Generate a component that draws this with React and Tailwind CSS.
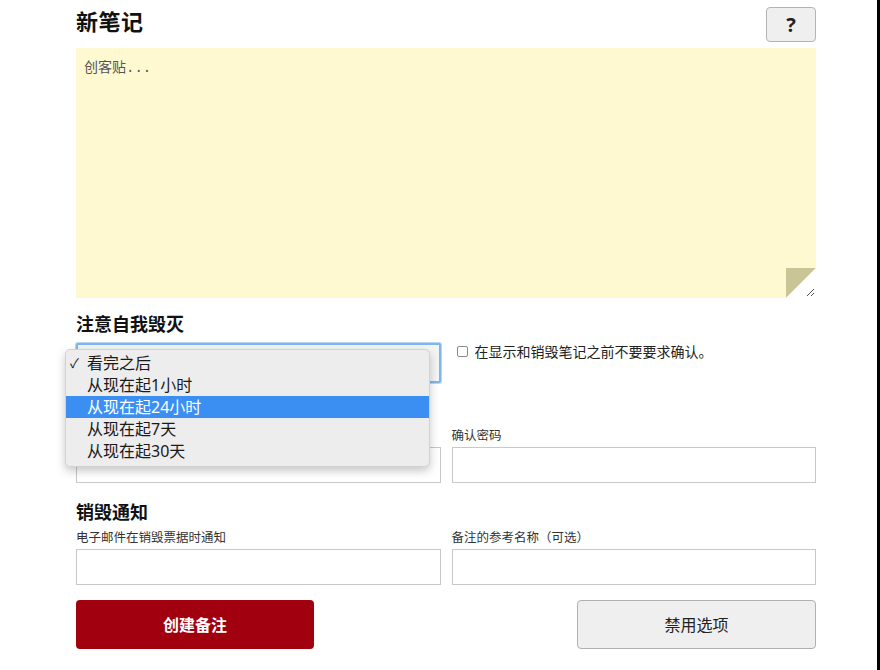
import { useState } from 'react';

// 新笔记 form with the self-destruct dropdown shown open
const OPTIONS = ['看完之后', '从现在起1小时', '从现在起24小时', '从现在起7天', '从现在起30天'];

function Field({ label }) {
  return (
    <div className="flex flex-col">
      <label className="h-[16px] text-[12.5px] leading-[16px] text-[#333] mb-[3px]">{label}</label>
      <input className="h-[36px] w-full border border-[#c8c8c8] bg-white outline-none" />
    </div>
  );
}

export default function App() {
  const [hover] = useState(2);

  return (
    <div
      className="w-[880px] h-[670px] flex bg-white text-[#111] overflow-hidden"
      style={{ fontFamily: '"Noto Sans", "Noto Sans CJK SC", sans-serif' }}
    >
      <div className="flex-1 pl-[76px]">
        <div className="w-[740px] flex flex-col">
          {/* Header */}
          <div className="flex items-center justify-between mt-[7px] h-[35px]">
            <h1 className="text-[22px] font-bold leading-none tracking-[0.5px] pb-[7px]">新笔记</h1>
            <button className="w-[50px] h-[35px] rounded-[4px] border border-[#b4b4b4] bg-[#efefef] text-[20px] font-bold text-[#222] leading-none">
              ?
            </button>
          </div>

          {/* Sticky note textarea */}
          <div className="relative mt-[6px] h-[250px] bg-[#fff9d1]">
            <div
              className="pt-[10px] pl-[8px] text-[14px] text-[#555]"
              style={{ fontFamily: '"Liberation Mono", "Noto Sans CJK SC", monospace' }}
            >
              创客贴...
            </div>
            <div className="absolute right-0 bottom-0 w-[30px] h-[30px] flex">
              <svg width="30" height="30" viewBox="0 0 30 30">
                <polygon points="0,0 30,0 0,30" fill="#c9c596" />
                <polygon points="30,0 30,30 0,30" fill="#ffffff" />
                <line x1="21" y1="28" x2="28" y2="21" stroke="#555" strokeWidth="1" />
                <line x1="25" y1="28" x2="28" y2="25" stroke="#555" strokeWidth="1" />
              </svg>
            </div>
          </div>

          {/* Self destruct */}
          <h2 className="mt-[16px] text-[18px] font-bold leading-[20px]">注意自我毁灭</h2>
          <div className="grid grid-cols-2 gap-[11px] mt-[9px]">
            <div className="relative">
              <div className="h-[40px] w-full rounded-[2px] border-2 border-[#7fb6ea] bg-[#f4f4f4] shadow-[0_0_0_1px_#b9d7f3]" />
              {/* open dropdown */}
              <div className="absolute left-[-11px] top-[6px] w-[365px] z-10 rounded-[5px] bg-[#ededed] border border-[#d2d2d2] shadow-[0_4px_10px_rgba(0,0,0,0.22)] pt-[2px] pb-[4px]">
                {OPTIONS.map((o, i) => (
                  <div
                    key={o}
                    className={`flex items-center h-[22px] text-[16px] leading-[22px] ${
                      i === hover ? 'bg-[#3b8ff2] text-white' : 'text-[#1a1a1a]'
                    }`}
                  >
                    <span className="w-[21px] pl-[4px] text-[13px]">{i === 0 ? '✓' : ''}</span>
                    <span>{o}</span>
                  </div>
                ))}
              </div>
            </div>
            <div className="flex items-start pl-[5px]">
              <span className="mt-[3px] w-[11px] h-[11px] rounded-[2px] border border-[#8a8a8a] bg-white shrink-0" />
              <span className="ml-[7px] text-[14px] leading-[17px] text-[#222]">在显示和销毁笔记之前不要要求确认。</span>
            </div>
          </div>

          <div className="grid grid-cols-2 gap-[11px] mt-[45px]">
            <Field label="" />
            <Field label="确认密码" />
          </div>

          {/* Destroy notice */}
          <h2 className="mt-[19px] text-[18px] font-bold leading-[20px]">销毁通知</h2>
          <div className="grid grid-cols-2 gap-[11px] mt-[8px]">
            <Field label="电子邮件在销毁票据时通知" />
            <Field label="备注的参考名称（可选）" />
          </div>

          {/* Buttons */}
          <div className="flex justify-between mt-[15px]">
            <button className="w-[238px] h-[49px] rounded-[4px] bg-[#a1000f] text-white text-[16px] font-bold">
              创建备注
            </button>
            <button className="w-[239px] h-[49px] rounded-[4px] border border-[#b0b0b0] bg-[#efefef] text-[16px] text-[#222]">
              禁用选项
            </button>
          </div>
        </div>
      </div>
      <div className="w-[3px] bg-black" />
    </div>
  );
}
